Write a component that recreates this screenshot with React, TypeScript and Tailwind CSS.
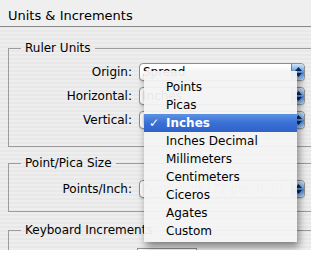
import React from 'react';

const stripes =
  'bg-[repeating-linear-gradient(180deg,#eeeeee_0px,#eeeeee_2px,#e8e8e8_2px,#e8e8e8_4px)]';

const Stepper: React.FC = () => (
  <div className="w-[13px] h-full rounded-r-[4px] bg-[linear-gradient(180deg,#cfe2f8_0%,#6fa4e6_45%,#4a86d8_55%,#a9cdf3_100%)] border-l border-[#5b86c0] flex flex-col items-center justify-center gap-[2px]">
    <svg width="7" height="4" viewBox="0 0 7 4"><path d="M0 4 L3.5 0 L7 4 Z" fill="#0e2a52" /></svg>
    <svg width="7" height="4" viewBox="0 0 7 4"><path d="M0 0 L3.5 4 L7 0 Z" fill="#0e2a52" /></svg>
  </div>
);

const Select: React.FC<{ value: string; faded?: boolean }> = ({ value, faded }) => (
  <div className="w-[166px] h-[18px] flex bg-white border border-[#8e8e8e] rounded-[4px] shadow-[0_1px_1px_rgba(0,0,0,0.15)]">
    <div className={`flex-1 pl-[3px] text-[12px] leading-[16px] truncate ${faded ? 'text-[#b0b0b0]' : 'text-black'}`}>{value}</div>
    <Stepper />
  </div>
);

const Row: React.FC<{ label: string; children: React.ReactNode }> = ({ label, children }) => (
  <div className="flex items-center h-[24px]">
    <div className="w-[130px] text-right pr-[7px] text-[12px] text-black">{label}</div>
    {children}
  </div>
);

const Group: React.FC<{ title: string; className?: string; children: React.ReactNode }> = ({ title, className, children }) => (
  <fieldset className={`ml-[8px] w-[340px] border border-[#9c9c9c] pl-0 ${className ?? ''}`}>
    <legend className="ml-[12px] px-[4px] text-[12px] text-black leading-[14px]">{title}</legend>
    {children}
  </fieldset>
);

const items = ['Points', 'Picas', 'Inches', 'Inches Decimal', 'Millimeters', 'Centimeters', 'Ciceros', 'Agates', 'Custom'];

export default function App() {
  return (
    <div className="w-[329px] h-[264px] bg-white overflow-hidden" style={{ fontFamily: '"DejaVu Sans", "Lucida Grande", sans-serif' }}>
      <div className={`relative w-[311px] h-[250px] overflow-hidden ${stripes}`}>
        <div className="h-[27px] border-b border-[#8a8a8a] pl-[8px] pt-[8px] text-[13px] leading-[16px] text-black bg-[#efefef]">
          Units &amp; Increments
        </div>

        <Group title="Ruler Units" className="mt-[14px] h-[106px]">
          <div className="pt-[5px]">
            <Row label="Origin:"><Select value="Spread" /></Row>
            <Row label="Horizontal:"><Select value="Inches" /></Row>
            <Row label="Vertical:"><Select value="Inches" /></Row>
          </div>
        </Group>

        <Group title="Point/Pica Size" className="mt-[9px] h-[56px]">
          <div className="pt-[7px]">
            <Row label="Points/Inch:"><Select value="PostScript (72 pts/inch)" faded /></Row>
          </div>
        </Group>

        <Group title="Keyboard Increments" className="mt-[11px] h-[60px]">
          <div className="pt-[8px]">
            <Row label="Cursor Key:">
              <div className="ml-[-2px] w-[60px] h-[18px] bg-white border border-[#8e8e8e] text-[12px] leading-[16px] pl-[2px]">0.0130 in</div>
            </Row>
          </div>
        </Group>

        {/* popup menu */}
        <div className="absolute left-[144px] top-[71px] w-[153px] h-[171px] bg-[#f3f3f3]/95 shadow-[2px_5px_8px_rgba(0,0,0,0.45)] pt-[7px]">
          {items.map((it) => (
            <div
              key={it}
              className={`h-[18px] flex items-center text-[12px] ${it === 'Inches' ? 'bg-[linear-gradient(180deg,#5c93e3_0%,#3a6fd6_50%,#2f62c9_100%)] text-white font-semibold' : 'text-black'}`}
            >
              <span className="w-[22px] pl-[5px] text-[12px]">{it === 'Inches' ? '✓' : ''}</span>
              <span>{it}</span>
            </div>
          ))}
        </div>
      </div>
    </div>
  );
}
